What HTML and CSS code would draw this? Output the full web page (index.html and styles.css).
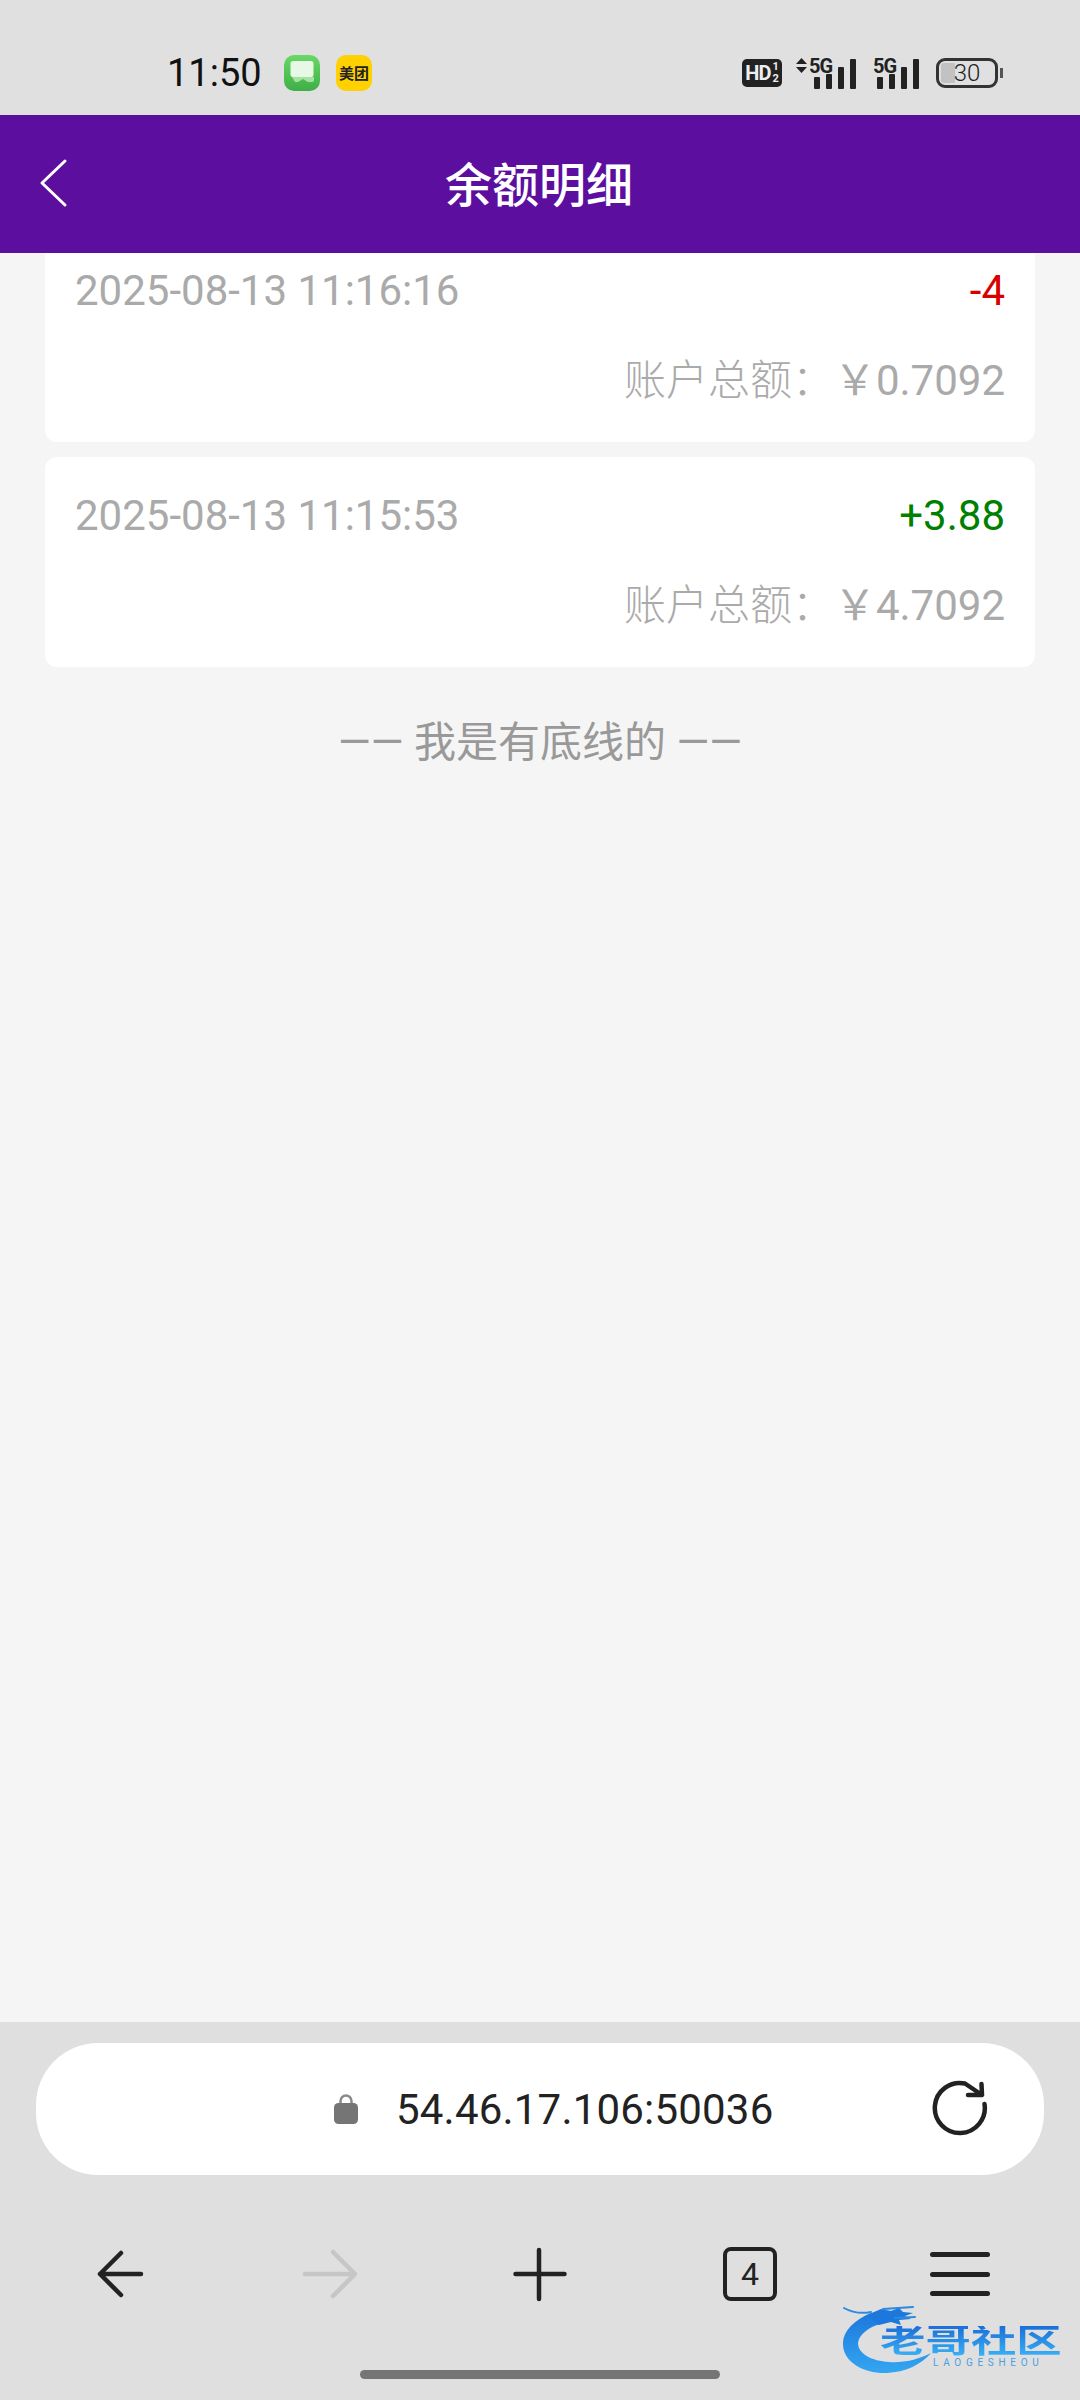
FILE: index.html
```html
<!DOCTYPE html>
<html lang="zh-CN">
<head>
  <meta charset="UTF-8">
  <title>余额明细</title>
  <link rel="stylesheet" href="styles.css">
</head>
<body>
  <div class="page">

    <div class="statusbar">
      <span class="time">11:50</span>
      <svg class="app-icon" width="36" height="36" viewBox="0 0 36 36">
        <defs>
          <linearGradient id="msgGreen" x1="0" y1="0" x2="0" y2="1">
            <stop offset="0" stop-color="#68d866"/>
            <stop offset="1" stop-color="#3fae48"/>
          </linearGradient>
        </defs>
        <rect width="36" height="36" rx="10" fill="url(#msgGreen)"/>
        <path d="M8 22h22v3a2 2 0 0 1-2 2h-1l-3 0-5-3-5 3h-2a2 2 0 0 1-2-2z" fill="#a5e2a2"/>
        <path d="M9 6h18a2.500 2.500 0 0 1 2.500 2.500v11a2.500 2.500 0 0 1-2.500 2.500h-18a2.500 2.500 0 0 1-2.500-2.500v-11a2.500 2.500 0 0 1 2.500-2.500z" fill="#e8f8e6"/>
      </svg>
      <span class="app-meituan">美团</span>

      <div class="status-right">
        <span class="hd-badge">HD<span class="hd-sim"><i>1</i><i>2</i></span></span>

        <svg class="signal signal-a" width="60" height="36" viewBox="0 -4 60 36">
          <path d="M0 7 5.500 1 11 7zM0 10 5.500 16 11 10z" fill="#222"/>
          <text x="13" y="16" class="net">5G</text>
          <rect x="18" y="20" width="6" height="12" rx="1" fill="#222"/>
          <rect x="30" y="17" width="6" height="15" rx="1" fill="#222"/>
          <rect x="42" y="10" width="6" height="22" rx="1" fill="#222"/>
          <rect x="54" y="2" width="6" height="30" rx="1" fill="#222"/>
        </svg>

        <svg class="signal signal-b" width="46" height="36" viewBox="0 -4 46 36">
          <text x="0" y="16" class="net">5G</text>
          <rect x="4" y="20" width="6" height="12" rx="1" fill="#222"/>
          <rect x="16" y="17" width="6" height="15" rx="1" fill="#222"/>
          <rect x="28" y="10" width="6" height="22" rx="1" fill="#222"/>
          <rect x="40" y="2" width="6" height="30" rx="1" fill="#222"/>
        </svg>

        <div class="battery">
          <div class="battery-body">
            <div class="battery-level"></div>
            <span class="battery-num">30</span>
          </div>
          <div class="battery-tip"></div>
        </div>
      </div>
    </div>

    <div class="header">
      <svg class="header-back" width="29" height="50" viewBox="0 0 29 50">
        <path d="M26 3 3 25 26 47" fill="none" stroke="#fff" stroke-width="3" stroke-linecap="round" stroke-linejoin="round"/>
      </svg>
      <div class="header-title">余额明细</div>
    </div>

    <div class="content">
      <div class="list">
        <div class="card">
          <div class="row">
            <span class="date">2025-08-13 11:16:16</span>
            <span class="change minus">-4</span>
          </div>
          <div class="row row-end"><span class="label">账户总额：</span>￥0.7092</div>
        </div>
        <div class="card">
          <div class="row">
            <span class="date">2025-08-13 11:15:53</span>
            <span class="change plus">+3.88</span>
          </div>
          <div class="row row-end"><span class="label">账户总额：</span>￥4.7092</div>
        </div>
      </div>
      <div class="list-end">—— 我是有底线的 ——</div>
    </div>

    <div class="browser">
      <div class="urlbar">
        <svg class="lock" width="24" height="30" viewBox="0 0 24 30">
          <path d="M6.500 11V7a5.500 5.500 0 0 1 11 0v4" fill="none" stroke="#8a8a8a" stroke-width="2.500"/>
          <rect y="9" width="24" height="21" rx="4.500" fill="#757575"/>
        </svg>
        <span class="url">54.46.17.106:50036</span>
        <svg class="reload" width="60" height="60" viewBox="0 0 60 60">
          <path d="M55.500 25A25 25 0 1 1 36 4.500L53 16M52.500 5 53 16 39 16" fill="none" stroke="#222" stroke-width="4.500" stroke-linecap="round" stroke-linejoin="round"/>
        </svg>
      </div>

      <div class="toolbar">
        <div class="tool">
          <svg width="60" height="60" viewBox="0 0 60 60">
            <path d="M51 30H10M31 9 10 30 31 51" fill="none" stroke="#222" stroke-width="4.500" stroke-linecap="round" stroke-linejoin="round"/>
          </svg>
        </div>
        <div class="tool">
          <svg width="60" height="60" viewBox="0 0 60 60">
            <path d="M5 30H55M33 8 55 30 33 52" fill="none" stroke="#c6c6c6" stroke-width="4.500" stroke-linecap="round" stroke-linejoin="round"/>
          </svg>
        </div>
        <div class="tool">
          <svg width="60" height="60" viewBox="0 0 60 60">
            <path d="M5.500 30H54.500M29 6V55" fill="none" stroke="#222" stroke-width="4.500" stroke-linecap="round"/>
          </svg>
        </div>
        <div class="tool">
          <div class="tabs-count">4</div>
        </div>
        <div class="tool">
          <div class="menu-lines"><i></i><i></i><i></i></div>
        </div>
      </div>

      <div class="home-bar"></div>

      <div class="watermark">
        <svg class="dragon" width="110" height="70" viewBox="0 0 110 70">
          <defs>
            <linearGradient id="dragonBlue" x1="0" y1="0" x2="0" y2="1">
              <stop offset="0" stop-color="#1c78dc"/>
              <stop offset="1" stop-color="#33a6f2"/>
            </linearGradient>
          </defs>
          <path d="M28 8C9 16-1 28 0 40 1 58 22 69 44 68 62 67 78 60 88 48 74 55 60 58 46 57 29 56 15 49 15 38 16 30 25 22 38 19Z" fill="url(#dragonBlue)"/>
          <path d="M24 10 38 4 48 6 56 3 60 7 70 8 62 11 68 14 56 15 58 20 48 17 36 20Z" fill="#1c78dc"/>
          <path d="M1 3C10 8 18 9 28 7M40 4 70 2M52 13 72 12" fill="none" stroke="#2a8ae2" stroke-width="2" stroke-linecap="round"/>
        </svg>
        <div class="watermark-name">老哥社区</div>
        <div class="watermark-sub">LAOGESHEOU</div>
      </div>
    </div>

  </div>
</body>
</html>
```

FILE: styles.css
```css
* { box-sizing: border-box; }
html, body {
  margin: 0; padding: 0; width: 1080px; height: 2400px; overflow: hidden;
  font-family: Roboto, 'Noto Sans CJK SC', sans-serif;
  background-color: #f5f5f5; color: #333;
}
.page { display: flex; flex-direction: column; width: 1080px; height: 2400px; }

/* status bar */
.statusbar {
  display: flex; align-items: center; flex: none;
  height: 115px; padding: 30px 77px 0 167px; background-color: #e0e0e0;
}
.time { font-size: 38px; color: #111; width: 117px; }
.app-icon { flex: none; }
.app-meituan {
  display: flex; align-items: center; justify-content: center;
  width: 36px; height: 36px; margin-left: 16px; border-radius: 10px;
  background-color: #ffd100; color: #222; font-size: 15px; font-weight: 700;
}
.status-right { display: flex; align-items: center; margin-left: auto; }
.hd-badge {
  display: flex; align-items: center; justify-content: center;
  width: 40px; height: 28px; border-radius: 5px; background-color: #222;
  color: #eee; font-size: 20px; font-weight: 700; letter-spacing: -1px;
}
.hd-sim { display: flex; flex-direction: column; margin-left: 2px; font-size: 11px; line-height: 12px; letter-spacing: 0; }
.hd-sim i { font-style: normal; }
.signal { flex: none; margin-bottom: 4px; }
.signal-a { margin-left: 14px; }
.signal-b { margin-left: 17px; }
.net { font-family: Roboto, sans-serif; font-size: 20px; font-weight: 700; fill: #222; letter-spacing: -1px; }
.battery { display: flex; align-items: center; margin-left: 17px; }
.battery-body {
  position: relative; display: flex; align-items: center; justify-content: center;
  width: 62px; height: 30px; padding: 2px; border: 3px solid #333; border-radius: 9px;
}
.battery-level { position: absolute; left: 2px; top: 2px; bottom: 2px; width: 14px; background-color: #c2c2c2; border-radius: 3px 0 0 3px; }
.battery-num { position: relative; font-size: 24px; font-weight: 300; color: #222; }
.battery-tip { width: 3px; height: 10px; margin-left: 2px; background-color: #555; }

/* title bar */
.header {
  display: grid; grid-template-columns: 1fr auto 1fr; align-items: center; flex: none;
  height: 138px; padding-left: 39px; background-color: #5c0e9e; position: relative; z-index: 1;
}
.header-back { display: block; margin-bottom: 2px; }
.header-title { margin: 0 0 5px -41px; font-size: 47px; font-weight: 500; color: #fff; }

/* list */
.content { flex: 1; min-height: 0; overflow: hidden; }
.list { display: flex; flex-direction: column; gap: 15px; margin-top: -21px; padding: 0 45px; }
.card { padding: 14px 30px 16px; background: white; border-radius: 12px; }
.row { display: flex; justify-content: space-between; height: 90px; line-height: 90px; font-size: 42px; color: #aaa; white-space: nowrap; }
.row-end { justify-content: flex-end; }
.label { font-weight: 300; }
.minus { color: #d80000; }
.plus { color: #008000; }
.list-end { margin-top: 46px; text-align: center; line-height: 60px; font-size: 42px; color: #999; }

/* browser chrome */
.browser { position: relative; flex: none; height: 378px; padding-top: 21px; background-color: #dfdfdf; }
.urlbar {
  display: flex; align-items: center; height: 132px; margin: 0 36px 0 36px;
  padding: 0 55px 0 298px; background: white; border-radius: 62px;
}
.lock { flex: none; }
.url { margin-left: 38px; font-size: 42px; letter-spacing: 0.200px; color: #222; }
.reload { margin-left: auto; }
.toolbar { display: flex; height: 190px; margin-top: 4px; padding: 0 15px; }
.tool { display: flex; flex: 1; align-items: center; justify-content: center; }
.tabs-count {
  display: flex; align-items: center; justify-content: center;
  width: 54px; height: 54px; border: 4.500px solid #222; border-radius: 8px;
  font-size: 32px; color: #222;
}
.menu-lines { display: flex; flex-direction: column; gap: 14.500px; width: 60px; }
.menu-lines i { display: block; height: 5px; background-color: #222; border-radius: 3px; }
.home-bar { width: 360px; height: 9px; margin: 1px auto 0; background-color: #757575; border-radius: 5px; }

/* forum watermark over the toolbar */
.watermark { position: absolute; left: 843px; top: 283px; width: 222px; height: 70px; }
.dragon { display: block; }
.watermark-name {
  position: absolute; left: 37px; top: 21px; transform: scaleX(1.42); transform-origin: left center;
  font-size: 32px; line-height: 30px; font-weight: 700; white-space: nowrap;
  background: linear-gradient(#1a6fd8, #39b0f5); -webkit-background-clip: text; background-clip: text; color: transparent;
}
.watermark-sub { position: absolute; left: 90px; top: 52px; font-size: 10px; line-height: 12px; letter-spacing: 4.700px; color: #4a9fe0; }
```
